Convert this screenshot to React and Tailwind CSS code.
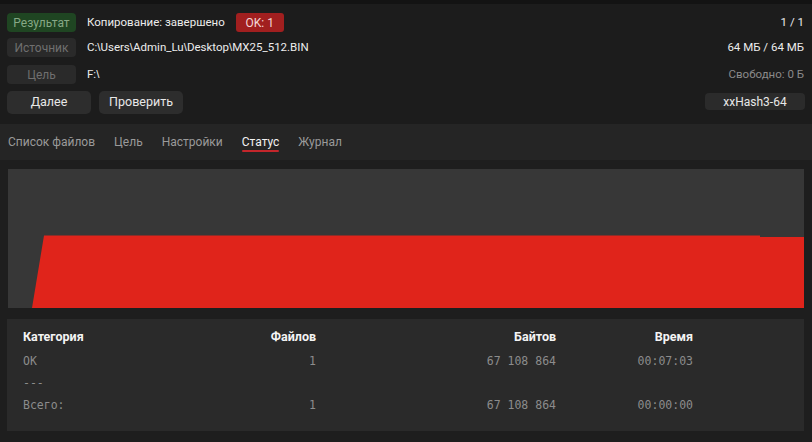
import React from "react";

const font = { fontFamily: 'Roboto, "Noto Sans", sans-serif' };

function Label({ children, className = "" }) {
  return (
    <div
      className={
        "w-[69px] h-[19px] rounded-[4px] flex items-center justify-center text-[12px] leading-none " +
        className
      }
    >
      {children}
    </div>
  );
}

function PathText({ text }) {
  const parts = text.split("\\");
  return (
    <span>
      {parts.map((p, i) => (
        <React.Fragment key={i}>
          {i > 0 && <span style={{ fontFamily: '"Liberation Sans", sans-serif' }}>\</span>}
          {p}
        </React.Fragment>
      ))}
    </span>
  );
}

export default function App() {
  const tabs = ["Список файлов", "Цель", "Настройки", "Статус", "Журнал"];
  const rows = [
    ["OK", "1", "67 108 864", "00:07:03"],
    ["---", "", "", ""],
    ["Всего:", "1", "67 108 864", "00:00:00"],
  ];
  return (
    <div
      className="w-[812px] h-[442px] bg-[#1e1e1e] text-[#e6e6e6] overflow-hidden flex flex-col"
      style={font}
    >
      <div className="h-[4px] bg-[#131313]" />
      {/* Header */}
      <div className="h-[120px] bg-[#1c1c1c] flex justify-between pl-[7px] pr-[8px] pt-[9px]">
        <div className="flex flex-col">
          <div className="flex items-center h-[19px]">
            <Label className="bg-[#1f4522] text-[#86a886]">Результат</Label>
            <span className="ml-[11px] text-[11.5px] text-[#ececec]">Копирование: завершено</span>
            <div className="ml-[11px] w-[48px] h-[19px] rounded-[3px] bg-[#a11f1f] text-[#f3d6d6] text-[12px] flex items-center justify-center">
              OK: 1
            </div>
          </div>
          <div className="flex items-center h-[19px] mt-[6px]">
            <Label className="bg-[#2a2a2a] text-[#6f6f6f]">Источник</Label>
            <span className="ml-[11px] text-[11.5px] text-[#ececec]">
              <PathText text={"C:\\Users\\Admin_Lu\\Desktop\\MX25_512.BIN"} />
            </span>
          </div>
          <div className="flex items-center h-[19px] mt-[8px]">
            <Label className="bg-[#2a2a2a] text-[#6f6f6f]">Цель</Label>
            <span className="ml-[11px] text-[11.5px] text-[#ececec]">
              <PathText text={"F:\\"} />
            </span>
          </div>
          <div className="flex items-center mt-[7px] gap-[8px]">
            <div className="w-[84px] h-[23px] rounded-[5px] bg-[#2d2d2d] text-[12.5px] text-[#e8e8e8] flex items-center justify-center">
              Далее
            </div>
            <div className="w-[84px] h-[23px] rounded-[5px] bg-[#2d2d2d] text-[12.5px] text-[#e8e8e8] flex items-center justify-center">
              Проверить
            </div>
          </div>
        </div>
        <div className="flex flex-col items-end">
          <div className="h-[19px] flex items-center text-[11.5px] text-[#ececec]">1 / 1</div>
          <div className="h-[19px] mt-[6px] flex items-center text-[11.5px] text-[#ececec]">64 МБ / 64 МБ</div>
          <div className="h-[19px] mt-[8px] flex items-center text-[11.5px] text-[#8a8a8a]">Свободно: 0 Б</div>
          <div className="mt-[9px] w-[100px] h-[17px] rounded-[4px] bg-[#2b2b2b] text-[12px] text-[#e8e8e8] flex items-center justify-center mr-[-1px]">
            xxHash3-64
          </div>
        </div>
      </div>
      {/* Tabs */}
      <div className="h-[36px] bg-[#252525] flex items-center pl-[8px] gap-[19px]">
        {tabs.map((t) => (
          <div key={t} className="relative h-full flex items-center">
            <span className={"text-[12px] " + (t === "Статус" ? "text-[#f2f2f2]" : "text-[#9a9a9a]")}>{t}</span>
            {t === "Статус" && (
              <div className="absolute left-0 right-0 top-[26px] h-[2px] bg-[#c4262b] rounded-full" />
            )}
          </div>
        ))}
      </div>
      {/* Chart */}
      <div className="mt-[9px] ml-[8px] w-[796px] h-[139px] bg-[#373737]">
        <svg width="796" height="139" viewBox="0 0 796 139" className="block">
          <polygon
            points="24,139 36,66.5 752,66.5 752,68 796,68 796,139"
            fill="#e0241b"
          />
        </svg>
      </div>
      {/* Table */}
      <div className="mt-[11px] ml-[7px] w-[797px] h-[112px] bg-[#2a2a2a] pt-[7px] pl-[16px]">
        <div className="flex h-[22px] items-center text-[12.5px] font-bold text-[#f4f4f4]">
          <div className="w-[200px]">Категория</div>
          <div className="w-[93px] text-right">Файлов</div>
          <div className="w-[240px] text-right">Байтов</div>
          <div className="w-[137px] text-right">Время</div>
        </div>
        <div className="mt-[3px]">
          {rows.map((r, i) => (
            <div
              key={i}
              className="flex h-[22px] items-center text-[11.5px] text-[#8c8c8c]"
              style={{ fontFamily: '"DejaVu Sans Mono", "Liberation Mono", monospace' }}
            >
              <div className="w-[200px]">{r[0]}</div>
              <div className="w-[93px] text-right">{r[1]}</div>
              <div className="w-[240px] text-right">{r[2]}</div>
              <div className="w-[137px] text-right">{r[3]}</div>
            </div>
          ))}
        </div>
      </div>
    </div>
  );
}
